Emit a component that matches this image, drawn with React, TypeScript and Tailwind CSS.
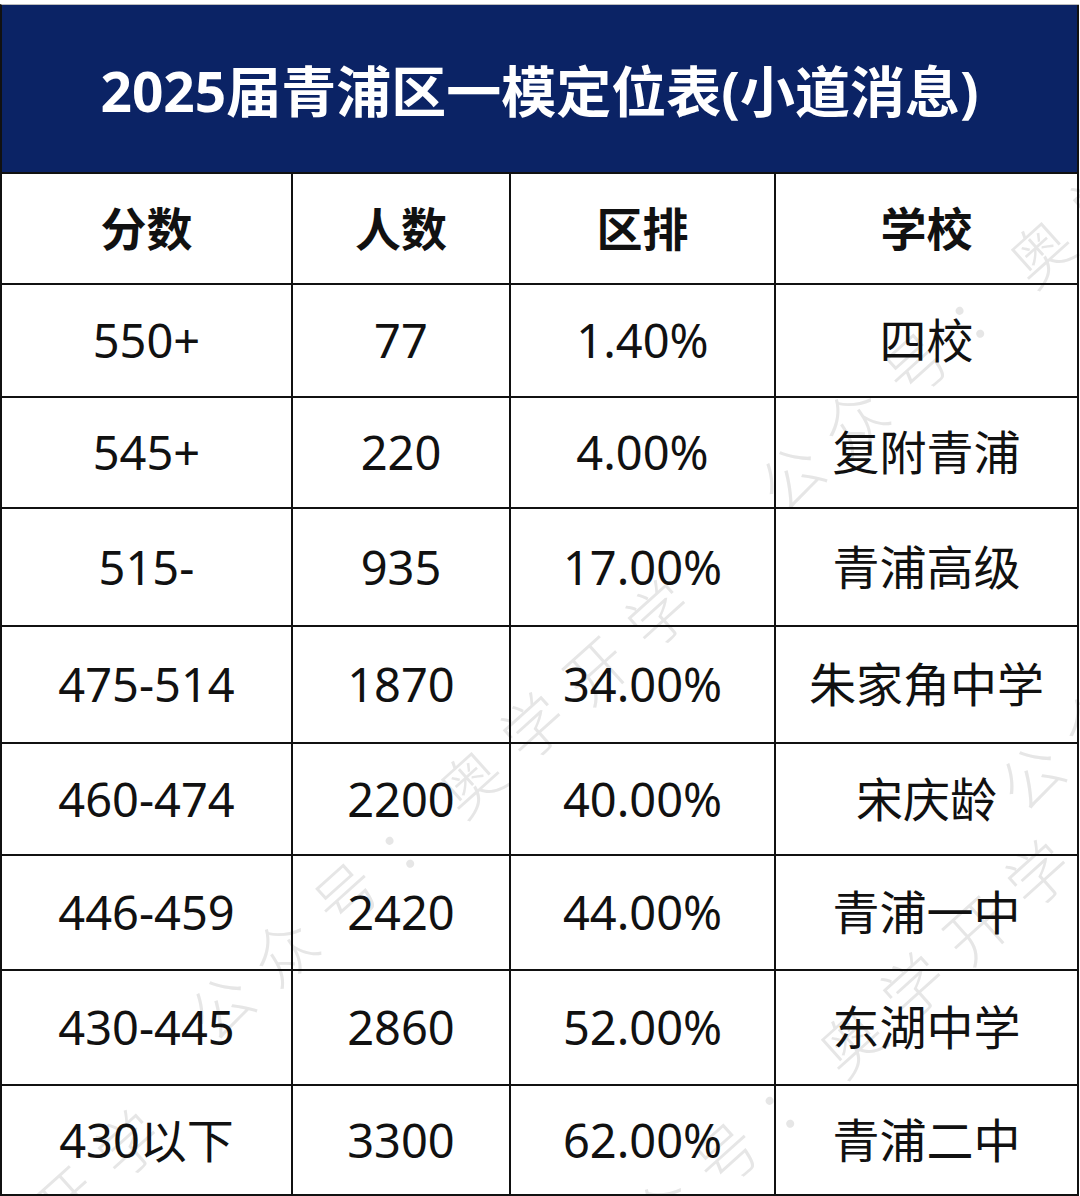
const rows = [
  { score: '550+', count: '77', rank: '1.40%', school: '四校', h: 'h-[113px]' },
  { score: '545+', count: '220', rank: '4.00%', school: '复附青浦', h: 'h-[111px]' },
  { score: '515-', count: '935', rank: '17.00%', school: '青浦高级', h: 'h-[118px]' },
  { score: '475-514', count: '1870', rank: '34.00%', school: '朱家角中学', h: 'h-[117px]' },
  { score: '460-474', count: '2200', rank: '40.00%', school: '宋庆龄', h: 'h-[112px]' },
  { score: '446-459', count: '2420', rank: '44.00%', school: '青浦一中', h: 'h-[115px]' },
  { score: '430-445', count: '2860', rank: '52.00%', school: '东湖中学', h: 'h-[115px]' },
  { score: '430以下', count: '3300', rank: '62.00%', school: '青浦二中', h: 'h-[110px]' },
]

const cols = ['w-[291px]', 'w-[218px]', 'w-[265px]', 'w-[303px]']

function Cell({ w, children, bold }: { w: string; children: React.ReactNode; bold?: boolean }) {
  return (
    <div
      className={`${w} flex h-full items-center justify-center border-r-2 border-[#111] ${
        bold ? 'text-[46px] font-bold' : 'text-[47px]'
      }`}
    >
      {children}
    </div>
  )
}

// faint diagonal watermark, sits under the table text
function Watermark({ className }: { className: string }) {
  return (
    <div
      className={`pointer-events-none absolute origin-left -rotate-[42deg] whitespace-nowrap font-['Liberation_Serif','Noto_Sans_CJK_SC',serif] text-[62px] font-light leading-[80px] tracking-[22px] text-[#e6e6e6] ${className}`}
    >
      公众号：奥学开学
    </div>
  )
}

export default function App() {
  return (
    <div className="relative h-[1196px] w-[1080px] overflow-hidden bg-white pt-[4px] font-['Noto_Sans','Noto_Sans_CJK_SC',sans-serif] text-[#111]">
      <Watermark className="left-[200px] top-[990px]" />
      <Watermark className="left-[770px] top-[460px]" />
      <Watermark className="left-[580px] top-[1250px]" />
      <Watermark className="left-[1010px] top-[760px]" />
      <Watermark className="left-[-330px] top-[1520px]" />
      <div className="relative w-[1079px] border-l-2 border-t border-l-[#111] border-t-[#bdbdbd]">
        <div className="flex h-[169px] items-center justify-center border-b-2 border-r-2 border-[#111] bg-[#0b2365] pt-[6px] text-[55px] font-bold text-white">
          2025届青浦区一模定位表(小道消息)
        </div>
        <div className="flex h-[111px] border-b-2 border-[#111]">
          <Cell w={cols[0]} bold>分数</Cell>
          <Cell w={cols[1]} bold>人数</Cell>
          <Cell w={cols[2]} bold>区排</Cell>
          <Cell w={cols[3]} bold>学校</Cell>
        </div>
        {rows.map((r) => (
          <div key={r.score} className={`flex ${r.h} border-b-2 border-[#111]`}>
            <Cell w={cols[0]}>{r.score}</Cell>
            <Cell w={cols[1]}>{r.count}</Cell>
            <Cell w={cols[2]}>{r.rank}</Cell>
            <Cell w={cols[3]}>{r.school}</Cell>
          </div>
        ))}
      </div>
    </div>
  )
}
